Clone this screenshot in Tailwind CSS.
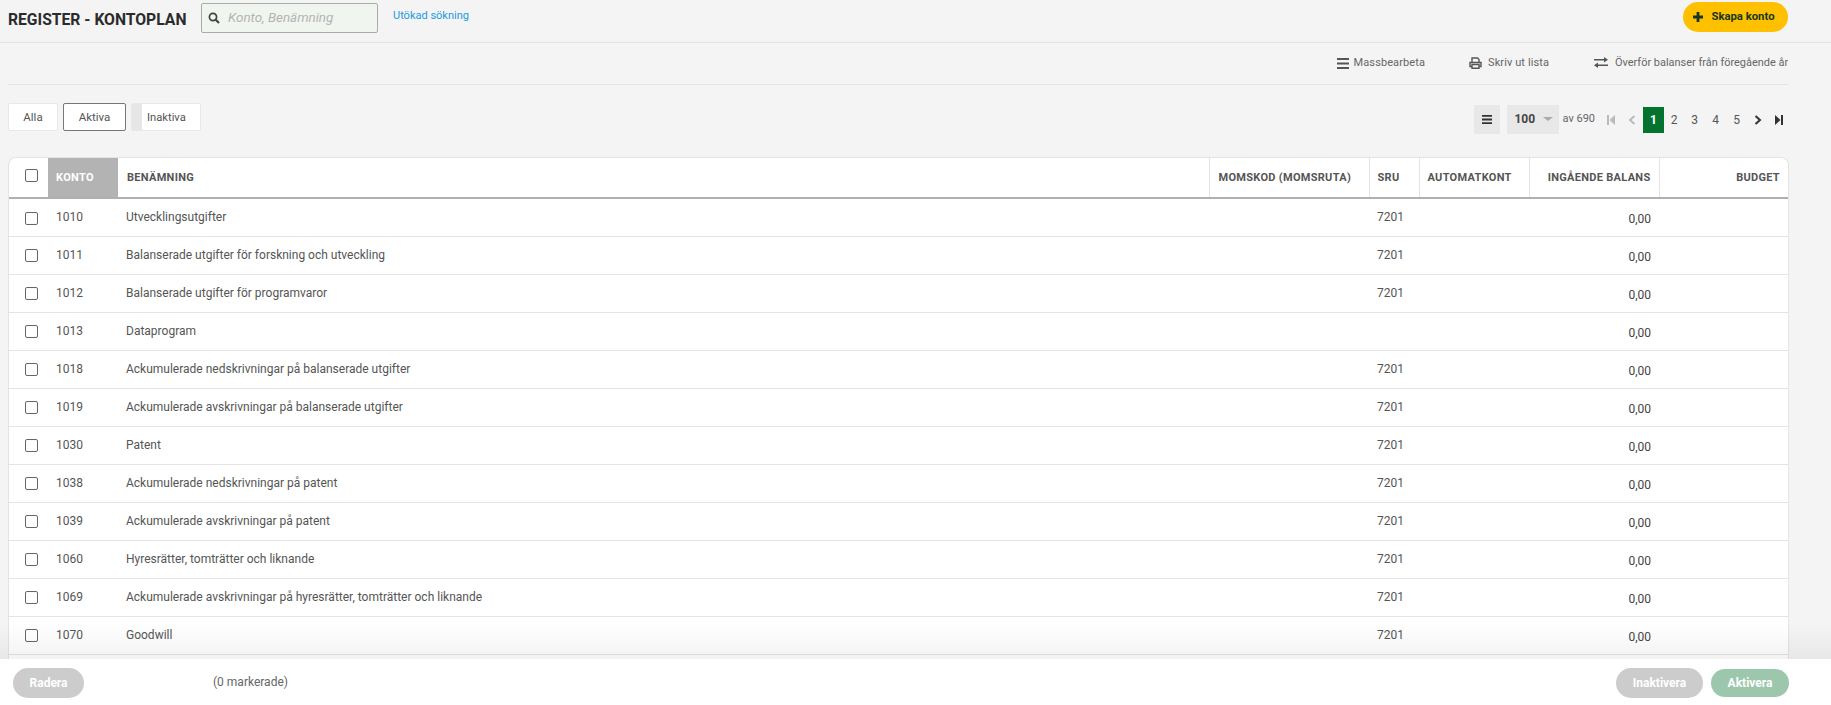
<!DOCTYPE html>
<html lang="sv">
<head>
    <meta charset="UTF-8">
    <meta name="viewport" content="width=device-width, initial-scale=1.0">
    <title>Register - Kontoplan</title>
    <script src="https://cdn.jsdelivr.net/npm/@tailwindcss/browser@4"></script>
</head>
<body class="relative h-[705px] overflow-hidden bg-[#f4f4f4] font-['Roboto',sans-serif] text-[12px] text-[#555]">
    <!-- top bar -->
    <header class="flex h-[43px] items-start border-b border-[#e4e4e4] pl-2 pr-[43px]">
        <h1 class="mt-[10px] w-[193px] shrink-0 text-[15.7px] leading-[20px] font-bold whitespace-nowrap text-[#2b2b2b]">REGISTER - KONTOPLAN</h1>
        <div class="mt-[3px] flex h-[30px] w-[177px] items-center rounded-[2px] border border-[#aaa] bg-[#f1f5ef] pl-[6px]">
            <svg class="h-[12px] w-[12px] text-[#444]" viewBox="0 0 12 12" fill="none" stroke="currentColor"><circle cx="5" cy="5" r="3.6" stroke-width="1.7"/><path d="M7.8 7.8 11 11" stroke-width="2.2"/></svg>
            <span class="ml-[8px] text-[13.4px] text-[#b4b4b4] italic">Konto, Benämning</span>
        </div>
        <a href="#" class="mt-[9px] ml-[15px] text-[11px] leading-[14px] text-[#1a9ae0]">Utökad sökning</a>
        <button class="mt-[2px] ml-auto flex h-[30px] w-[105px] items-center justify-center gap-[8px] rounded-full bg-[#ffc000] pr-[3px] text-[11.3px] font-bold text-[#17381f]">
            <svg class="h-[10px] w-[10px]" viewBox="0 0 10 10" fill="currentColor"><path d="M3.6 0h2.8v3.6H10v2.8H6.4V10H3.6V6.4H0V3.6h3.6z"/></svg>
            Skapa konto
        </button>
    </header>

    <!-- actions -->
    <div class="mx-2 mr-[43px] flex h-[42px] items-center justify-end overflow-hidden border-b border-[#e4e4e4] pb-[1px] text-[11px] tracking-[0.1px] text-[#666]">
        <a href="#" class="flex items-center gap-[5px]">
            <svg class="h-[11px] w-[12px] text-[#555]" viewBox="0 0 12 11" fill="currentColor"><path d="M0 0h12v2H0zM0 4.500h12v2H0zM0 9h12v2H0z"/></svg>
            Massbearbeta
        </a>
        <a href="#" class="ml-[44px] flex items-center gap-[6px]">
            <svg class="h-[12px] w-[13px] text-[#555]" viewBox="0 0 13 12" fill="none" stroke="currentColor" stroke-width="1.400"><path d="M3 5V1h5.500L10 2.500V5"/><path d="M3 9.500H1V5.500h11v4h-2"/><path d="M3 7.500h7v3.800H3z"/></svg>
            Skriv ut lista
        </a>
        <a href="#" class="ml-[45px] flex w-[194px] shrink-0 items-center gap-[7px] whitespace-nowrap">
            <svg class="h-[11px] w-[14px] shrink-0 text-[#555]" viewBox="0 0 14 11" fill="currentColor"><path d="M0 2h10V0l4 2.750-4 2.750V3.500H0zM14 7.500H4V5.500L0 8.250 4 11V9h10z"/></svg>
            <span class="text-[10.95px] tracking-normal">Överför balanser från föregående år</span>
        </a>
    </div>

    <!-- filter and pager -->
    <div class="flex h-[72px] items-start pr-[43px] pl-2">
        <div class="mt-[18px] flex gap-[5px] text-[11.5px]">
            <button class="h-[28px] w-[50px] rounded-[2px] border border-[#e8e8e8] bg-white pt-[1px]">Alla</button>
            <button class="h-[28px] w-[63px] rounded-[2px] border border-[#777] bg-white pt-[1px]">Aktiva</button>
            <button class="flex h-[28px] w-[70px] overflow-hidden rounded-[2px] border border-[#e8e8e8] bg-white">
                <span class="h-full w-[10px] bg-[#e6e6e6]"></span>
                <span class="ml-[5px] text-[11.2px] leading-[27px]">Inaktiva</span>
            </button>
        </div>
        <div class="mt-[20px] mr-[5px] ml-auto flex items-start">
            <button class="flex h-[29px] w-[26px] items-center justify-center bg-[#e8e8e8]">
                <svg class="h-[9px] w-[10px] text-[#333]" viewBox="0 0 10 9" fill="currentColor"><path d="M0 0h10v1.800H0zM0 3.600h10v1.800H0zM0 7.200h10V9H0z"/></svg>
            </button>
            <div class="ml-[7px] flex h-[29px] w-[52px] items-center bg-[#e8e8e8] pb-[1px] pl-[7px] text-[12px] font-bold text-[#444]">
                100
                <span class="ml-[8px] h-0 w-0 border-x-[5px] border-t-[4px] border-x-transparent border-t-[#aaa]"></span>
            </div>
            <span class="ml-[3px] text-[11px] leading-[28px] text-[#666]">av 690</span>
            <div class="mt-[2px] ml-[12px] flex h-[26px] items-center text-[12px] text-[#555]">
                <svg class="mr-[13px] h-[10px] w-[8px] text-[#bbb]" viewBox="0 0 8 10" fill="currentColor"><path d="M0 0h2v10H0zM8 0v10L2.500 5z"/></svg>
                <svg class="mr-[7px] h-[10px] w-[8px] text-[#bbb]" viewBox="0 0 8 10" fill="none" stroke="currentColor" stroke-width="2"><path d="M6.500 1 2 5l4.500 4"/></svg>
                <span class="flex h-[26px] w-[21px] items-center justify-center bg-[#04732f] pb-[1px] font-bold text-white">1</span>
                <span class="mb-[1px] w-[20px] text-center">2</span>
                <span class="mb-[1px] w-[21px] text-center">3</span>
                <span class="mb-[1px] w-[21px] text-center">4</span>
                <span class="mb-[1px] w-[21px] text-center">5</span>
                <svg class="ml-[7px] h-[10px] w-[8px] text-[#333]" viewBox="0 0 8 10" fill="none" stroke="currentColor" stroke-width="2"><path d="M1.500 1 6 5 1.500 9"/></svg>
                <svg class="ml-[13px] h-[10px] w-[8px] text-[#333]" viewBox="0 0 8 10" fill="currentColor"><path d="M0 0v10l5.500-5zM6 0h2v10H6z"/></svg>
            </div>
        </div>
    </div>

    <!-- account table -->
    <div class="ml-2 w-[1781px] overflow-hidden rounded-t-[8px] border-x border-t border-[#e4e4e4] bg-white">
        <table class="w-full table-fixed border-collapse">
            <colgroup>
                <col class="w-[39px]"><col class="w-[70px]"><col class="w-[1091px]"><col class="w-[160px]"><col class="w-[50px]"><col class="w-[110px]"><col class="w-[130px]"><col>
            </colgroup>
            <thead class="text-[11px] font-bold tracking-[0.3px] text-[#555]">
                <tr class="h-[40px] border-b-[2px] border-[#b0b0b0]">
                    <th class="pb-[4px] pl-[6px] text-center"><input type="checkbox" class="h-[13px] w-[13px] appearance-none rounded-[2px] border border-[#666] bg-white align-middle"></th>
                    <th class="bg-[#b3b3b3] pt-[2px] pl-[8px] text-left text-white">KONTO</th>
                    <th class="pt-[2px] pl-[9px] text-left">BENÄMNING</th>
                    <th class="border-l border-[#e4e4e4] pt-[2px] pl-[9px] text-left">MOMSKOD (MOMSRUTA)</th>
                    <th class="border-l border-[#e4e4e4] pt-[2px] pl-[8px] text-left">SRU</th>
                    <th class="border-l border-[#e4e4e4] pt-[2px] pl-[8px] text-left">AUTOMATKONT</th>
                    <th class="border-l border-[#e4e4e4] pt-[2px] pr-[8px] text-right">INGÅENDE BALANS</th>
                    <th class="border-l border-[#e4e4e4] pt-[2px] pr-[8px] text-right">BUDGET</th>
                </tr>
            </thead>
            <tbody class="[&>tr]:h-[38px] [&>tr]:border-b [&>tr]:border-[#e4e4e4]">
                <tr><td class="pl-[6px] text-center"><input type="checkbox" class="h-[13px] w-[13px] appearance-none rounded-[2px] border border-[#666] bg-white align-middle"></td><td class="pl-[8px]">1010</td><td class="pl-[8px]">Utvecklingsutgifter</td><td></td><td class="pl-[8px]">7201</td><td></td><td class="pt-[4px] pr-[8px] text-right text-[#444]">0,00</td><td></td></tr>
                <tr><td class="pl-[6px] text-center"><input type="checkbox" class="h-[13px] w-[13px] appearance-none rounded-[2px] border border-[#666] bg-white align-middle"></td><td class="pl-[8px]">1011</td><td class="pl-[8px]">Balanserade utgifter för forskning och utveckling</td><td></td><td class="pl-[8px]">7201</td><td></td><td class="pt-[4px] pr-[8px] text-right text-[#444]">0,00</td><td></td></tr>
                <tr><td class="pl-[6px] text-center"><input type="checkbox" class="h-[13px] w-[13px] appearance-none rounded-[2px] border border-[#666] bg-white align-middle"></td><td class="pl-[8px]">1012</td><td class="pl-[8px]">Balanserade utgifter för programvaror</td><td></td><td class="pl-[8px]">7201</td><td></td><td class="pt-[4px] pr-[8px] text-right text-[#444]">0,00</td><td></td></tr>
                <tr><td class="pl-[6px] text-center"><input type="checkbox" class="h-[13px] w-[13px] appearance-none rounded-[2px] border border-[#666] bg-white align-middle"></td><td class="pl-[8px]">1013</td><td class="pl-[8px]">Dataprogram</td><td></td><td class="pl-[8px]"></td><td></td><td class="pt-[4px] pr-[8px] text-right text-[#444]">0,00</td><td></td></tr>
                <tr><td class="pl-[6px] text-center"><input type="checkbox" class="h-[13px] w-[13px] appearance-none rounded-[2px] border border-[#666] bg-white align-middle"></td><td class="pl-[8px]">1018</td><td class="pl-[8px]">Ackumulerade nedskrivningar på balanserade utgifter</td><td></td><td class="pl-[8px]">7201</td><td></td><td class="pt-[4px] pr-[8px] text-right text-[#444]">0,00</td><td></td></tr>
                <tr><td class="pl-[6px] text-center"><input type="checkbox" class="h-[13px] w-[13px] appearance-none rounded-[2px] border border-[#666] bg-white align-middle"></td><td class="pl-[8px]">1019</td><td class="pl-[8px]">Ackumulerade avskrivningar på balanserade utgifter</td><td></td><td class="pl-[8px]">7201</td><td></td><td class="pt-[4px] pr-[8px] text-right text-[#444]">0,00</td><td></td></tr>
                <tr><td class="pl-[6px] text-center"><input type="checkbox" class="h-[13px] w-[13px] appearance-none rounded-[2px] border border-[#666] bg-white align-middle"></td><td class="pl-[8px]">1030</td><td class="pl-[8px]">Patent</td><td></td><td class="pl-[8px]">7201</td><td></td><td class="pt-[4px] pr-[8px] text-right text-[#444]">0,00</td><td></td></tr>
                <tr><td class="pl-[6px] text-center"><input type="checkbox" class="h-[13px] w-[13px] appearance-none rounded-[2px] border border-[#666] bg-white align-middle"></td><td class="pl-[8px]">1038</td><td class="pl-[8px]">Ackumulerade nedskrivningar på patent</td><td></td><td class="pl-[8px]">7201</td><td></td><td class="pt-[4px] pr-[8px] text-right text-[#444]">0,00</td><td></td></tr>
                <tr><td class="pl-[6px] text-center"><input type="checkbox" class="h-[13px] w-[13px] appearance-none rounded-[2px] border border-[#666] bg-white align-middle"></td><td class="pl-[8px]">1039</td><td class="pl-[8px]">Ackumulerade avskrivningar på patent</td><td></td><td class="pl-[8px]">7201</td><td></td><td class="pt-[4px] pr-[8px] text-right text-[#444]">0,00</td><td></td></tr>
                <tr><td class="pl-[6px] text-center"><input type="checkbox" class="h-[13px] w-[13px] appearance-none rounded-[2px] border border-[#666] bg-white align-middle"></td><td class="pl-[8px]">1060</td><td class="pl-[8px]">Hyresrätter, tomträtter och liknande</td><td></td><td class="pl-[8px]">7201</td><td></td><td class="pt-[4px] pr-[8px] text-right text-[#444]">0,00</td><td></td></tr>
                <tr><td class="pl-[6px] text-center"><input type="checkbox" class="h-[13px] w-[13px] appearance-none rounded-[2px] border border-[#666] bg-white align-middle"></td><td class="pl-[8px]">1069</td><td class="pl-[8px]">Ackumulerade avskrivningar på hyresrätter, tomträtter och liknande</td><td></td><td class="pl-[8px]">7201</td><td></td><td class="pt-[4px] pr-[8px] text-right text-[#444]">0,00</td><td></td></tr>
                <tr><td class="pl-[6px] text-center"><input type="checkbox" class="h-[13px] w-[13px] appearance-none rounded-[2px] border border-[#666] bg-white align-middle"></td><td class="pl-[8px]">1070</td><td class="pl-[8px]">Goodwill</td><td></td><td class="pl-[8px]">7201</td><td></td><td class="pt-[4px] pr-[8px] text-right text-[#444]">0,00</td><td></td></tr>
                <tr><td colspan="8"></td></tr>
            </tbody>
        </table>
    </div>

    <!-- sticky footer -->
    <div class="absolute inset-x-0 bottom-0">
        <div class="h-[36px] bg-linear-to-b from-black/0 to-black/5"></div>
        <div class="flex h-[46px] items-start bg-white pr-[42px] pl-[13px]">
            <button class="mt-[9px] h-[30px] w-[71px] rounded-full bg-[#cccccc] text-[12px] font-bold text-white">Radera</button>
            <span class="mt-[15px] ml-[129px] leading-[16px] text-[#666]">(0 markerade)</span>
            <button class="mt-[9px] ml-auto h-[30px] w-[87px] rounded-full bg-[#cccccc] text-[12px] font-bold text-white">Inaktivera</button>
            <button class="mt-[10px] ml-[8px] h-[28px] w-[78px] rounded-full bg-[#9cc7ad] text-[12px] font-bold text-white">Aktivera</button>
        </div>
    </div>
</body>
</html>
